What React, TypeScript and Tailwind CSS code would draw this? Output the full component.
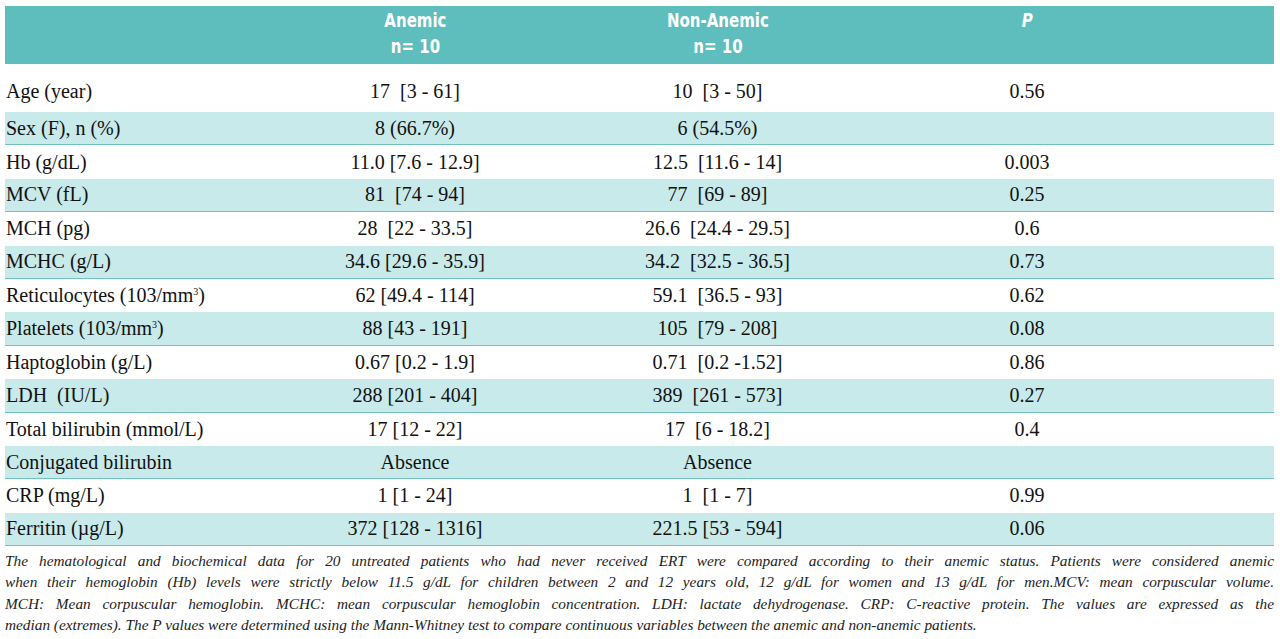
import React from 'react';

type Row = { label: React.ReactNode; anemic: string; non: string; p: string };

const Sup = () => <sup className="text-[10px] top-[-7px]">3</sup>;

const rows: Row[] = [
  { label: 'Age (year)', anemic: '17  [3 - 61]', non: '10  [3 - 50]', p: '0.56' },
  { label: 'Sex (F), n (%)', anemic: '8 (66.7%)', non: '6 (54.5%)', p: '' },
  { label: 'Hb (g/dL)', anemic: '11.0 [7.6 - 12.9]', non: '12.5  [11.6 - 14]', p: '0.003' },
  { label: 'MCV (fL)', anemic: '81  [74 - 94]', non: '77  [69 - 89]', p: '0.25' },
  { label: 'MCH (pg)', anemic: '28  [22 - 33.5]', non: '26.6  [24.4 - 29.5]', p: '0.6' },
  { label: 'MCHC (g/L)', anemic: '34.6 [29.6 - 35.9]', non: '34.2  [32.5 - 36.5]', p: '0.73' },
  {
    label: (
      <>
        Reticulocytes (103/mm<Sup />)
      </>
    ),
    anemic: '62 [49.4 - 114]',
    non: '59.1  [36.5 - 93]',
    p: '0.62',
  },
  {
    label: (
      <>
        Platelets (103/mm<Sup />)
      </>
    ),
    anemic: '88 [43 - 191]',
    non: '105  [79 - 208]',
    p: '0.08',
  },
  { label: 'Haptoglobin (g/L)', anemic: '0.67 [0.2 - 1.9]', non: '0.71  [0.2 -1.52]', p: '0.86' },
  { label: 'LDH  (IU/L)', anemic: '288 [201 - 404]', non: '389  [261 - 573]', p: '0.27' },
  { label: 'Total bilirubin (mmol/L)', anemic: '17 [12 - 22]', non: '17  [6 - 18.2]', p: '0.4' },
  { label: 'Conjugated bilirubin', anemic: 'Absence', non: 'Absence', p: '' },
  { label: 'CRP (mg/L)', anemic: '1 [1 - 24]', non: '1  [1 - 7]', p: '0.99' },
  { label: 'Ferritin (µg/L)', anemic: '372 [128 - 1316]', non: '221.5 [53 - 594]', p: '0.06' },
];

const cols = 'grid grid-cols-[260px_300px_305px_314px_1fr]';

export default function App() {
  return (
    <div className="w-[1280px] h-[639px] bg-white overflow-hidden pt-[6px] pl-[5px] pr-[6px] font-['Liberation_Serif',serif] text-[#111]">
      {/* header */}
      <div
        className={`${cols} h-[58px] bg-[#5ebdbd] text-white font-bold text-[20px] leading-[26px] pt-[1px] font-['DejaVu_Sans',sans-serif]`}
      >
        <div />
        <div className="text-center">
          <span className="inline-block scale-x-[0.75]">
            Anemic
            <br />
            n= 10
          </span>
        </div>
        <div className="text-center">
          <span className="inline-block scale-x-[0.75]">
            Non-Anemic
            <br />
            n= 10
          </span>
        </div>
        <div className="text-center italic">
          <span className="inline-block scale-x-[0.75]">P</span>
        </div>
        <div />
      </div>

      {/* body rows */}
      {rows.map((r, i) => {
        const band = i % 2 === 1;
        const first = i === 0;
        return (
          <div
            key={i}
            className={`${cols} text-[20px] leading-[23px] whitespace-pre ${
              first ? 'h-[48px] items-end pb-[9px]' : 'h-[33.4px] items-center'
            } ${band ? 'bg-[#c8eaea] border-b border-[#72c2c2]' : ''}`}
          >
            <div className="pl-[1px]">{r.label}</div>
            <div className="text-center">{r.anemic}</div>
            <div className="text-center">{r.non}</div>
            <div className="text-center">{r.p}</div>
            <div />
          </div>
        );
      })}

      {/* footnote */}
      <div className="pt-[4px] italic text-[15.3px] leading-[21.3px] text-[#1c1c1c]">
        <p className="text-justify [text-align-last:justify]">
          The hematological and biochemical data for 20 untreated patients who had never received ERT were compared according to their anemic status. Patients were considered anemic
        </p>
        <p className="text-justify [text-align-last:justify]">
          when their hemoglobin (Hb) levels were strictly below 11.5 g/dL for children between 2 and 12 years old, 12 g/dL for women and 13 g/dL for men.MCV: mean corpuscular volume.
        </p>
        <p className="text-justify [text-align-last:justify]">
          MCH: Mean corpuscular hemoglobin. MCHC: mean corpuscular hemoglobin concentration. LDH: lactate dehydrogenase. CRP: C-reactive protein. The values are expressed as the
        </p>
        <p>
          median (extremes). The P values were determined using the Mann-Whitney test to compare continuous variables between the anemic and non-anemic patients.
        </p>
      </div>
    </div>
  );
}
